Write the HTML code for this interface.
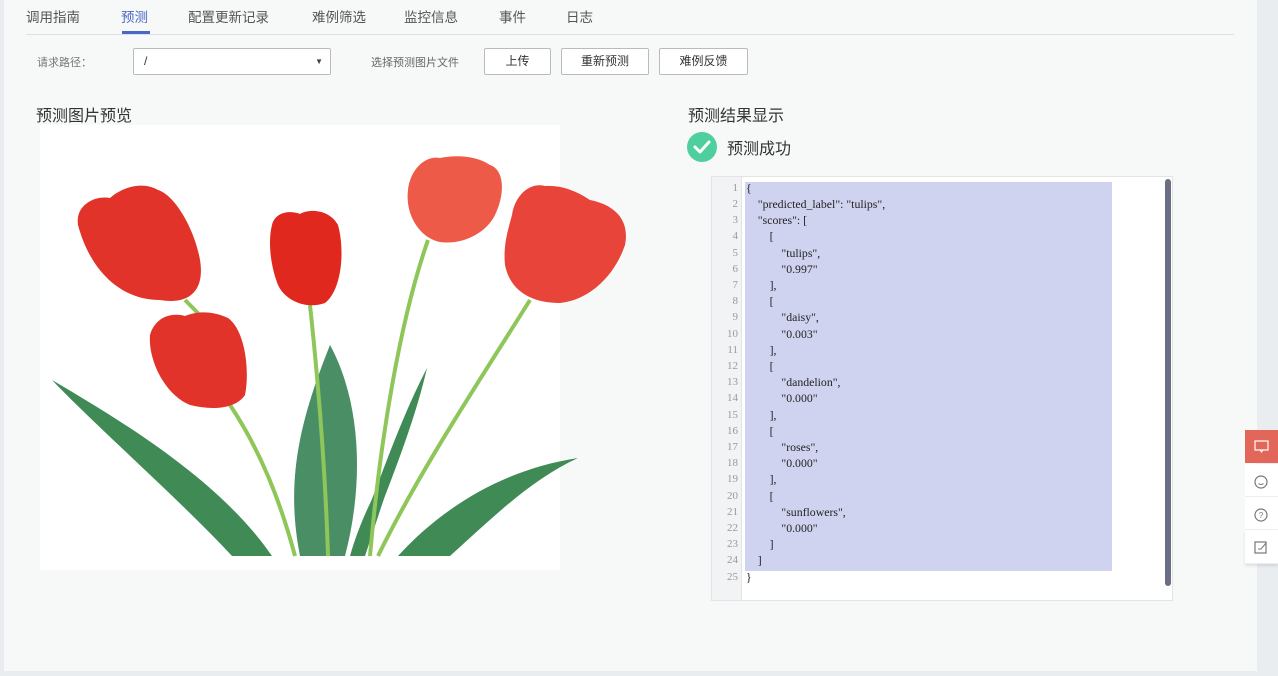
<!DOCTYPE html>
<html><head><meta charset="utf-8"><style>
*{margin:0;padding:0;box-sizing:border-box}
body{width:1278px;height:676px;background:#e9edef;font-family:"Liberation Sans","Noto Sans CJK SC",sans-serif;position:relative;overflow:hidden}
.main{position:absolute;left:4px;top:0;width:1253px;height:671px;background:#f6f9f8}
.tab{position:absolute;top:6px;font-size:13.5px;color:#555}
.abs{position:absolute}
.btn{position:absolute;top:48px;height:27px;border:1px solid #b9bcbe;background:#fff;border-radius:2px;font-size:12px;color:#333;text-align:center;line-height:25px}
.code{position:absolute;left:711px;top:176px;width:462px;height:425px;background:#fff;border:1px solid #e2e4e6}
.gut{position:absolute;left:0;top:0;width:30px;height:423px;background:#f2f3f4;border-right:1px solid #e4e4e4}
.hl{position:absolute;left:33px;top:5px;width:367px;height:389px;background:#d0d3ef}
.ln{position:absolute;left:0;width:26px;text-align:right;font-family:"Liberation Serif",serif;font-size:11px;color:#999}
.tx{position:absolute;left:34px;font-family:"Liberation Serif",serif;font-size:11.8px;color:#222;white-space:pre}
.side{position:absolute;left:1245px;width:33px;height:33px;background:#fff;border-bottom:1px solid #eee}
</style></head><body>
<div class="main">
<div class="tab" style="left:22px">调用指南</div>
<div class="tab" style="left:117px;color:#4a66c9">预测</div>
<div class="abs" style="left:118px;top:31px;width:28px;height:3px;background:#4a66c9"></div>
<div class="tab" style="left:184px">配置更新记录</div>
<div class="tab" style="left:308px">难例筛选</div>
<div class="tab" style="left:400px">监控信息</div>
<div class="tab" style="left:495px">事件</div>
<div class="tab" style="left:562px">日志</div>
<div class="abs" style="left:22px;top:34px;width:1208px;height:1px;background:#dde0e2"></div>
<div class="abs" style="left:33px;top:54px;font-size:11px;color:#777">请求路径：</div>
<div class="abs" style="left:129px;top:48px;width:198px;height:27px;background:#fff;border:1px solid #b9bcbe;border-radius:2px;font-size:12px;line-height:25px;padding-left:10px;color:#333">/<span style="position:absolute;right:7px;top:0;font-size:8px;color:#444">▼</span></div>
<div class="abs" style="left:367px;top:54px;font-size:11px;color:#666">选择预测图片文件</div>
<div class="btn" style="left:480px;width:67px">上传</div>
<div class="btn" style="left:557px;width:88px">重新预测</div>
<div class="btn" style="left:655px;width:89px">难例反馈</div>
<div class="abs" style="left:32px;top:102px;font-size:16px;color:#333">预测图片预览</div>
<div class="abs" style="left:684px;top:102px;font-size:16px;color:#333">预测结果显示</div>
<div class="abs" style="left:683px;top:132px;width:30px;height:30px;border-radius:50%;background:#4fcf9d"><svg width="30" height="30"><path d="M8 15 L13 20 L22 10" stroke="#fff" stroke-width="3" fill="none" stroke-linecap="round" stroke-linejoin="round"/></svg></div>
<div class="abs" style="left:723px;top:135px;font-size:16px;color:#333">预测成功</div>
</div>
<svg class="abs" style="left:0;top:0" width="700" height="600">
<rect x="40" y="125" width="520" height="445" fill="#fff"/>
<g fill="#3f8a55">
<path d="M52 380 C120 420 220 480 272 556 L232 556 C180 500 100 430 52 380Z"/>
<path d="M330 345 C360 400 365 480 345 556 L300 556 C285 480 300 420 330 345Z" fill="#4a8e66"/>
<path d="M578 458 C500 470 440 510 398 556 L450 556 C490 520 530 480 578 458Z"/>
<path d="M427 368 C400 420 380 480 360 530 L372 530 C395 470 415 420 427 368Z"/>
<path d="M400 450 C380 480 360 520 350 556 L365 556 Z"/>
</g>
<g stroke="#8fc65a" stroke-width="4" fill="none">
<path d="M185 300 C195 310 200 315 205 322"/>
<path d="M230 405 C260 450 280 500 295 556"/>
<path d="M310 305 C318 380 325 460 328 556"/>
<path d="M428 240 C400 320 380 440 370 556"/>
<path d="M530 300 C480 380 420 470 378 556"/>
</g>
<g fill="#e2332a">
<path d="M78 225 C75 205 95 195 110 198 C125 185 145 182 158 190 C175 195 195 230 200 260 C205 290 190 305 160 300 C120 300 90 270 78 225Z"/>
<path d="M150 335 C155 318 170 312 185 316 C200 310 215 312 228 318 C245 330 250 370 245 395 C235 410 210 410 190 405 C165 395 148 360 150 335Z"/>
<path d="M272 225 C275 212 290 210 300 214 C310 208 330 210 338 225 C345 250 342 290 325 303 C305 310 285 300 278 285 C270 265 268 240 272 225Z" fill="#e0281f"/>
<path d="M408 190 C410 170 425 155 440 158 C455 155 475 155 490 165 C505 170 505 195 495 215 C485 235 460 245 440 242 C420 238 405 215 408 190Z" fill="#ee5a48"/>
<path d="M512 215 C515 195 530 182 545 186 C560 185 575 190 590 200 C615 205 630 220 625 245 C615 275 590 300 560 303 C530 303 510 290 505 265 C503 245 508 230 512 215Z" fill="#e8443a"/>
</g>
</svg>
<div class="code">
<div class="gut"></div>
<div class="hl"></div>
<div class="abs" style="left:453px;top:2px;width:6px;height:407px;background:#6a6f86;border-radius:3px"></div>
<div class="ln" style="top:5px">1</div><div class="ln" style="top:21px">2</div><div class="ln" style="top:37px">3</div><div class="ln" style="top:53px">4</div><div class="ln" style="top:70px">5</div><div class="ln" style="top:86px">6</div><div class="ln" style="top:102px">7</div><div class="ln" style="top:118px">8</div><div class="ln" style="top:134px">9</div><div class="ln" style="top:151px">10</div><div class="ln" style="top:167px">11</div><div class="ln" style="top:183px">12</div><div class="ln" style="top:199px">13</div><div class="ln" style="top:215px">14</div><div class="ln" style="top:232px">15</div><div class="ln" style="top:248px">16</div><div class="ln" style="top:264px">17</div><div class="ln" style="top:280px">18</div><div class="ln" style="top:296px">19</div><div class="ln" style="top:313px">20</div><div class="ln" style="top:329px">21</div><div class="ln" style="top:345px">22</div><div class="ln" style="top:361px">23</div><div class="ln" style="top:377px">24</div><div class="ln" style="top:394px">25</div>
<div class="tx" style="top:4px">{</div>
<div class="tx" style="top:20px">    "predicted_label": "tulips",</div>
<div class="tx" style="top:36px">    "scores": [</div>
<div class="tx" style="top:52px">        [</div>
<div class="tx" style="top:69px">            "tulips",</div>
<div class="tx" style="top:85px">            "0.997"</div>
<div class="tx" style="top:101px">        ],</div>
<div class="tx" style="top:117px">        [</div>
<div class="tx" style="top:133px">            "daisy",</div>
<div class="tx" style="top:150px">            "0.003"</div>
<div class="tx" style="top:166px">        ],</div>
<div class="tx" style="top:182px">        [</div>
<div class="tx" style="top:198px">            "dandelion",</div>
<div class="tx" style="top:214px">            "0.000"</div>
<div class="tx" style="top:231px">        ],</div>
<div class="tx" style="top:247px">        [</div>
<div class="tx" style="top:263px">            "roses",</div>
<div class="tx" style="top:279px">            "0.000"</div>
<div class="tx" style="top:295px">        ],</div>
<div class="tx" style="top:312px">        [</div>
<div class="tx" style="top:328px">            "sunflowers",</div>
<div class="tx" style="top:344px">            "0.000"</div>
<div class="tx" style="top:360px">        ]</div>
<div class="tx" style="top:376px">    ]</div>
<div class="tx" style="top:393px">}</div>
</div>
<div class="side" style="top:430px;background:#e2675a;border:none"><svg width="33" height="33"><rect x="10" y="11" width="13" height="9" fill="none" stroke="#fff" stroke-width="1.2"/><path d="M15 20 L16.5 22 L18 20" stroke="#fff" fill="none"/></svg></div>
<div class="side" style="top:464px"><svg width="33" height="33"><circle cx="16" cy="18" r="6" fill="none" stroke="#777" stroke-width="1.2"/><path d="M13.5 19.5 Q16 21.5 18.5 19.5" stroke="#777" fill="none"/></svg></div>
<div class="side" style="top:497px"><svg width="33" height="33"><circle cx="16" cy="18" r="6" fill="none" stroke="#777" stroke-width="1.2"/><text x="16" y="21" font-size="8" text-anchor="middle" fill="#777" font-family="Liberation Sans">?</text></svg></div>
<div class="side" style="top:530px;height:34px;box-shadow:0 2px 3px rgba(0,0,0,.1)"><svg width="33" height="33"><rect x="10" y="12" width="11" height="11" fill="none" stroke="#777" stroke-width="1.2"/><path d="M13 19 L16 19 L21 13" stroke="#777" fill="none"/></svg></div>
</body></html>
